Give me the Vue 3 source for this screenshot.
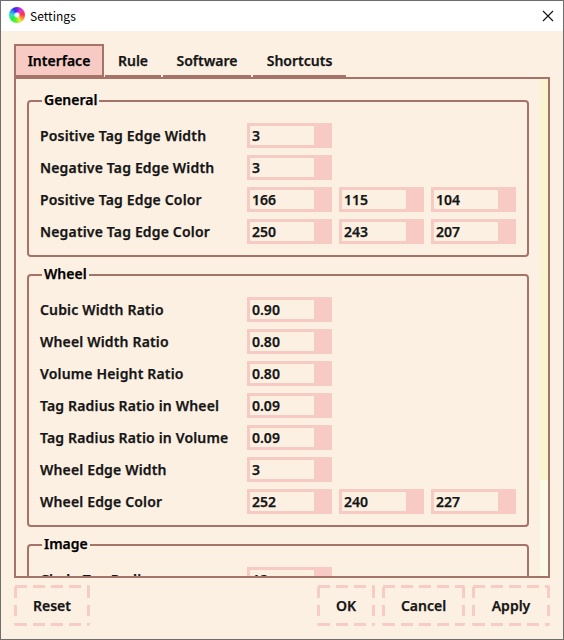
<script setup>
const tabs = [
  { name: 'Interface', width: 90 },
  { name: 'Rule', width: 58 },
  { name: 'Software', width: 90 },
  { name: 'Shortcuts', width: 95 },
]
const groups = [
  {
    title: 'General',
    rows: [
      ['Positive Tag Edge Width', ['3']],
      ['Negative Tag Edge Width', ['3']],
      ['Positive Tag Edge Color', ['166', '115', '104']],
      ['Negative Tag Edge Color', ['250', '243', '207']],
    ],
  },
  {
    title: 'Wheel',
    rows: [
      ['Cubic Width Ratio', ['0.90']],
      ['Wheel Width Ratio', ['0.80']],
      ['Volume Height Ratio', ['0.80']],
      ['Tag Radius Ratio in Wheel', ['0.09']],
      ['Tag Radius Ratio in Volume', ['0.09']],
      ['Wheel Edge Width', ['3']],
      ['Wheel Edge Color', ['252', '240', '227']],
    ],
  },
  {
    title: 'Image',
    rows: [['Circle Tag Radius', ['12']]],
  },
]
</script>

<template>
  <div class="window">
    <header class="titlebar">
      <span class="logo"></span>
      <span class="title">Settings</span>
      <svg class="close" width="12" height="12" viewBox="0 0 12 12">
        <path d="M1 1L11 11M11 1L1 11" stroke="#111" stroke-width="1.1" fill="none" />
      </svg>
    </header>
    <nav class="tabs">
      <div
        v-for="(t, i) in tabs"
        :key="t.name"
        class="tab"
        :class="{ active: i === 0 }"
        :style="{ width: t.width + 'px' }"
      >{{ t.name }}</div>
    </nav>
    <main class="panel">
      <div class="content">
        <section v-for="g in groups" :key="g.title" class="group">
          <h2 class="legend"><span>{{ g.title }}</span></h2>
          <div v-for="r in g.rows" :key="r[0]" class="row">
            <label>{{ r[0] }}</label>
            <div v-for="(v, i) in r[1]" :key="i" class="spin">{{ v }}</div>
          </div>
        </section>
      </div>
      <div class="track"><div class="thumb"></div></div>
    </main>
    <footer class="actions">
      <button class="btn reset">Reset</button>
      <button class="btn ok">OK</button>
      <button class="btn cancel">Cancel</button>
      <button class="btn apply">Apply</button>
    </footer>
  </div>
</template>

<style>
body {
  margin: 0;
  overflow: hidden;
}
</style>

<style scoped>
* {
  box-sizing: border-box;
}
.window {
  width: 564px;
  height: 640px;
  border: 1px solid #706c6c;
  background: #fcf0e3;
  display: flex;
  flex-direction: column;
  font: 600 14px/20px 'Noto Sans', sans-serif;
  color: #151515;
  -webkit-text-stroke: 0.25px currentColor;
  overflow: hidden;
}
.titlebar {
  height: 30px;
  flex: none;
  background: #fff;
  display: flex;
  align-items: center;
  padding: 0 9px 0 8px;
  -webkit-text-stroke: 0;
}
.logo {
  width: 16px;
  height: 16px;
  margin-top: -2px;
  border-radius: 50%;
  background:
    radial-gradient(circle, #fff 0 1.5px, transparent 3.4px),
    conic-gradient(#7a20e8, #e63cc8 45deg, #ff3545 85deg, #ff9a35 125deg, #e8f030 155deg, #60f030 190deg, #20f050 235deg, #30e0d0 275deg, #3090ff 305deg, #3030e0 335deg, #7a20e8);
}
.title {
  margin: 0 0 0 5px;
  font: 400 12px/20px 'Noto Sans CJK SC', sans-serif;
  letter-spacing: 0.05px;
  color: #000;
  flex: 1;
}
.close {
  margin-top: -1px;
}
.tabs {
  display: flex;
  flex: none;
  height: 33px;
  margin: 13px 13px 0;
}
.tab {
  height: 33px;
  text-align: center;
  padding-top: 7px;
  background: linear-gradient(#a67368, #a67368) 50% 100% / calc(100% - 2px) 2px no-repeat;
}
.tab.active {
  background: #f7cac4;
  border: 2px solid #a67368;
  padding-top: 5px;
  color: #000;
}
.panel {
  flex: none;
  height: 501px;
  width: 536px;
  margin: 0 13px;
  border: 2px solid #a67368;
  display: flex;
  overflow: hidden;
}
.content {
  width: 524px;
  padding: 21px 11px 0;
}
.group {
  width: 502px;
  border: 2px solid #a67368;
  border-radius: 4px;
  padding: 0 0 11px 11px;
  margin-bottom: 17px;
}
.legend {
  margin: -12px 0 13px 2px;
  height: 20px;
  font: inherit;
  color: #000;
}
.legend span {
  display: inline-block;
  background: #fcf0e3;
  padding: 0 2px;
}
.row {
  display: flex;
  gap: 7px;
  height: 25px;
  margin-bottom: 7px;
}
.row:last-child {
  margin-bottom: 0;
}
.row label {
  width: 200px;
  line-height: 25px;
  letter-spacing: 0.16px;
  white-space: nowrap;
}
.spin {
  width: 85px;
  height: 25px;
  border: 3px solid #f7cac4;
  border-right-width: 18px;
  padding-left: 2px;
  line-height: 19px;
}
.track {
  width: 8px;
  background: repeating-conic-gradient(#fffff4 0 25%, #f4f6da 0 50%) 0 0 / 2px 2px;
}
.thumb {
  height: 401px;
  background: #faf3cf;
}
.actions {
  display: flex;
  gap: 7px;
  margin: 7px 13px 0;
}
.btn {
  height: 41px;
  border: 0;
  padding: 0;
  border-radius: 2px;
  font: inherit;
  color: inherit;
  --h: repeating-linear-gradient(90deg, #f6ccc5 1px 13px, transparent 13px 19px);
  --v: repeating-linear-gradient(180deg, #f6ccc5 2px 13px, transparent 13px 20px);
  background:
    var(--h) 0 0 / 100% 3px no-repeat,
    var(--h) 0 100% / 100% 3px no-repeat,
    var(--v) 0 0 / 3px 100% no-repeat,
    var(--v) 100% 0 / 3px 100% no-repeat;
}
.reset {
  width: 76px;
  margin-right: auto;
}
.ok {
  width: 58px;
}
.cancel {
  width: 83px;
}
.apply {
  width: 78px;
}
</style>
